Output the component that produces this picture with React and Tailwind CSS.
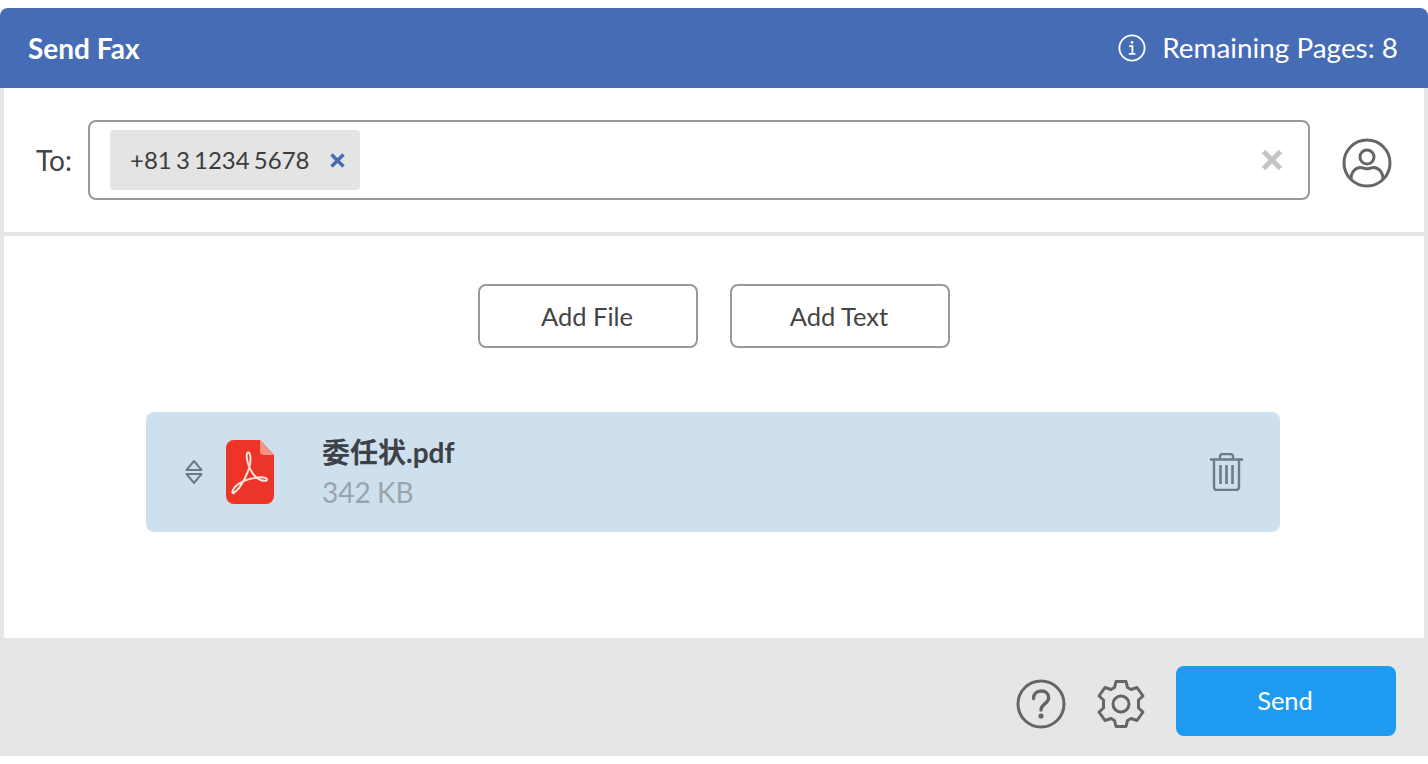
import React from "react";

const InfoIcon = () => (
  <svg width="28" height="28" viewBox="0 0 28 28" fill="none" stroke="#fff" strokeWidth="1.8">
    <circle cx="14" cy="14" r="12.6" />
    <circle cx="14" cy="8.4" r="1.4" fill="#fff" stroke="none" />
    <path d="M11.2 12.2h3.2v7.4M10.800 19.800h6.600" strokeWidth="1.800" />
  </svg>
);

const UserIcon = () => (
  <svg width="50" height="50" viewBox="0 0 50 50" fill="none" stroke="#666" strokeWidth="3">
    <circle cx="25" cy="25" r="23" />
    <circle cx="25" cy="19" r="7" />
    <path d="M9 41c0-7 4.500-11.500 9.500-11.500 2 0 3.500 1.200 6.500 1.200s4.500-1.200 6.500-1.200c5 0 9.500 4.500 9.500 11.500" />
  </svg>
);

const SortIcon = () => (
  <svg width="18" height="26" viewBox="0 0 18 26" fill="none" stroke="#6f7b85" strokeWidth="2" strokeLinejoin="round">
    <path d="M1.500 11 9 2l7.500 9z" />
    <path d="M1.500 15 9 24l7.500-9z" />
  </svg>
);

const PdfIcon = () => (
  <svg width="48" height="64" viewBox="0 0 48 64">
    <path d="M8 0h26l14 15v41a8 8 0 0 1-8 8H8a8 8 0 0 1-8-8V8a8 8 0 0 1 8-8z" fill="#ec3528" />
    <path d="M34 0l14 15H38a4 4 0 0 1-4-4z" fill="#f79284" />
    <path
      d="M7 53c3-1 8-7 12-15 3.500-7 5.500-13 5.500-19 0-4-1-7-2.500-6.500-2 .7-1.500 7 .5 12.500 3 8 8 13.500 12 15 3.500 1.300 6.500 1 6.500-.6 0-2-5-2.600-11-1.700-8 1.200-17 4.800-21 9.300-3 3.500-3.500 6.800-1 6z"
      fill="none"
      stroke="#fde3dc"
      strokeWidth="2"
      strokeLinejoin="round"
    />
  </svg>
);

const TrashIcon = () => (
  <svg width="33" height="38" viewBox="0 0 33 38" fill="none" stroke="#6f7b85" strokeWidth="2.400">
    <path d="M0 6.500h33" />
    <path d="M10 6V3.500C10 2 11 1 12.500 1h8C22 1 23 2 23 3.500V6" />
    <path d="M4 6.500v27c0 2 1 3.500 3 3.500h19c2 0 3-1.500 3-3.500v-27" />
    <path d="M10.500 12v19M16.500 12v19M22.500 12v19" strokeWidth="2.600" />
  </svg>
);

const HelpIcon = () => (
  <svg width="50" height="50" viewBox="0 0 50 50" fill="none" stroke="#666" strokeWidth="3">
    <circle cx="25" cy="25" r="23" />
    <path d="M17.500 19.500c0-4.500 3.300-7.500 7.700-7.500 4.300 0 7.500 2.800 7.500 6.700 0 5.800-7.700 6-7.700 12.300" strokeLinecap="round" strokeWidth="3.400" />
    <circle cx="25" cy="37" r="2.600" fill="#666" stroke="none" />
  </svg>
);

const GearIcon = () => (
  <svg width="50" height="50" viewBox="0 0 50 50" fill="none" stroke="#666" strokeWidth="3" strokeLinejoin="round">
    <circle cx="25" cy="25" r="8" />
    <path d="M20 2.500h10l1.500 6 3.500 2 6-2 6 8.500-4.500 4v8l4.500 4-6 8.500-6-2-3.500 2-1.500 6H20l-1.500-6-3.500-2-6 2-6-8.500 4.500-4v-8l-4.500-4 6-8.500 6 2 3.500-2z" />
  </svg>
);

const App = () => {
  return (
    <div className="bg-white py-2 h-[764px] font-['Lato','Noto_Sans_CJK_JP',sans-serif]">
      <div className="flex flex-col h-[748px]">
        <header className="flex items-center justify-between h-20 pr-[30px] pl-7 bg-[#466cb6] rounded-t-lg text-white">
          <h1 className="text-[28px] font-bold">Send Fax</h1>
          <div className="flex items-center gap-4 text-[27.900px]">
            <InfoIcon />
            <span>Remaining Pages: 8</span>
          </div>
        </header>

        <div className="flex flex-col flex-1 border-x-4 border-[#e6e6e6]">
          <div className="flex items-center h-[148px] pl-8 pr-7 border-b-4 border-[#e6e6e6]">
            <span className="w-[52px] text-[28px] text-[#444]">To:</span>
            <div className="flex items-center justify-between w-[1222px] h-20 pl-[20px] pr-[26px] border-2 border-[#999] rounded-lg">
              <div className="flex items-center gap-[21px] h-[60px] pl-5 pr-[15px] bg-[#e4e4e4] rounded text-[24px] text-[#3c3c3c] [word-spacing:-2px]">
                <span>+81 3 1234 5678</span>
                <svg width="15" height="15" viewBox="0 0 15 15" stroke="#466cb6" strokeWidth="3.500">
                  <path d="M1.500 1.500l12 12M13.500 1.500l-12 12" />
                </svg>
              </div>
              <svg width="20" height="20" viewBox="0 0 20 20" stroke="#c4c4c4" strokeWidth="5">
                <path d="M1.500 1.500l17 17M18.500 1.500l-17 17" />
              </svg>
            </div>
            <div className="ml-8 mt-[6px]">
              <UserIcon />
            </div>
          </div>

          <div className="flex flex-col items-center flex-1">
            <div className="flex gap-8 mt-12">
              <button className="w-[220px] h-16 pr-[2px] bg-white border-2 border-[#999] rounded-lg text-[25.500px] text-[#444]">Add File</button>
              <button className="w-[220px] h-16 pr-[2px] bg-white border-2 border-[#999] rounded-lg text-[25.500px] text-[#444]">Add Text</button>
            </div>
            <div className="flex items-center w-[1134px] h-[120px] mt-16 mr-[2px] pl-[39px] pr-[37px] bg-[#cedfed] rounded-lg">
              <SortIcon />
              <div className="ml-[23px]">
                <PdfIcon />
              </div>
              <div className="flex-1 ml-12">
                <div className="text-[28px] font-bold text-[#3e4246] leading-[36px]">委任状.pdf</div>
                <div className="text-[28px] text-[#9ba4ab] leading-[36px] mt-1 [word-spacing:-1px]">342 KB</div>
              </div>
              <TrashIcon />
            </div>
          </div>
        </div>

        <footer className="flex items-center justify-end h-[118px] pt-2 pr-8 bg-[#e6e6e6]">
          <div className="mt-[6px]">
            <HelpIcon />
          </div>
          <div className="ml-[30px] mt-[6px]">
            <GearIcon />
          </div>
          <button className="w-[220px] h-[70px] ml-[30px] pr-[2px] pb-[2px] bg-[#1e9bf0] rounded-lg text-[25.500px] text-white">Send</button>
        </footer>
      </div>
    </div>
  );
};

export default App;
